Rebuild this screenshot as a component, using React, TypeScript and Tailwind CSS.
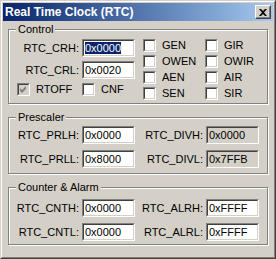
import React from "react";

const face = "font-['Liberation_Sans',Arial,sans-serif]";

function Field({ value, selected, readOnly }: { value: string; selected?: boolean; readOnly?: boolean }) {
  return (
    <div className="h-[18px] w-[53px] border border-t-[#808080] border-l-[#808080] border-b-white border-r-white">
      <div
        className={`h-full flex items-center pl-px border border-t-[#404040] border-l-[#404040] border-b-[#D4D0C8] border-r-[#D4D0C8] ${
          readOnly ? "bg-[#D4D0C8]" : "bg-white"
        }`}
      >
        <span className={`leading-[12px] ${selected ? "bg-[#0A246A] text-white" : "text-black"}`}>{value}</span>
      </div>
    </div>
  );
}

function Check({ label, checked, disabled }: { label: string; checked?: boolean; disabled?: boolean }) {
  return (
    <div className="flex items-center gap-[6px] h-[13px]">
      <div className="w-[13px] h-[13px] shrink-0 border border-t-[#808080] border-l-[#808080] border-b-white border-r-white">
        <div
          className={`h-full flex items-center justify-center border border-t-[#404040] border-l-[#404040] border-b-[#D4D0C8] border-r-[#D4D0C8] ${
            disabled ? "bg-[#D4D0C8]" : "bg-white"
          }`}
        >
          {checked && (
            <svg width="7" height="7" viewBox="0 0 7 7">
              <path d="M0 2 L2 4 L6 0 L6 3 L2 7 L0 5 Z" fill={disabled ? "#808080" : "#000"} />
            </svg>
          )}
        </div>
      </div>
      <span className="leading-[15px]">{label}</span>
    </div>
  );
}

function Label({ children }: { children: React.ReactNode }) {
  return <div className="text-right leading-[15px] whitespace-nowrap">{children}</div>;
}

function Group({ title, className, children }: { title: string; className: string; children: React.ReactNode }) {
  return (
    <div
      className={`relative border border-[#808080] shadow-[inset_1px_1px_0_#fff,1px_1px_0_#fff] ${className}`}
    >
      <div className="absolute left-[7px] top-[-8px] px-[2px] bg-[#D4D0C8] leading-[15px] whitespace-nowrap">
        {title}
      </div>
      {children}
    </div>
  );
}

export default function App() {
  return (
    <div
      className={`w-[276px] h-[259px] bg-[#D4D0C8] text-[11px] text-black ${face} border border-t-[#D4D0C8] border-l-[#D4D0C8] border-r-[#404040] border-b-[#404040]`}
    >
      <div className="h-full p-px flex flex-col border border-t-white border-l-white border-r-[#808080] border-b-[#808080]">
        <div className="h-[18px] flex items-center justify-between pl-[2px] pr-[2px] bg-gradient-to-r from-[#0A246A] to-[#A6CAF0]">
          <span className="text-white font-bold text-[12px] leading-[16px]">Real Time Clock (RTC)</span>
          <div className="w-[16px] h-[14px] border border-t-white border-l-white border-r-[#404040] border-b-[#404040]">
            <div className="h-full flex items-center justify-center bg-[#D4D0C8] border border-t-[#D4D0C8] border-l-[#D4D0C8] border-r-[#808080] border-b-[#808080]">
              <svg width="8" height="7" viewBox="0 0 8 7">
                <path d="M0 0h2l2 2 2-2h2L5 3.5 8 7H6L4 5 2 7H0l3-3.5z" fill="#000" />
              </svg>
            </div>
          </div>
        </div>

        <div className="flex-1 px-[5px]">
          <Group title="Control" className="h-[75px] mt-[8px]">
            <div className="flex pt-[9px]">
              <div className="grid grid-cols-[70px_53px] gap-x-[3px] gap-y-[4px] items-center content-start">
                <Label>RTC_CRH:</Label>
                <Field value="0x0000" selected />
                <Label>RTC_CRL:</Label>
                <Field value="0x0020" />
                <div className="pl-[8px]">
                  <Check label="RTOFF" checked disabled />
                </div>
                <Check label="CNF" />
              </div>
              <div className="ml-[8px] grid grid-cols-[62px_62px] gap-y-[3px] content-start">
                <Check label="GEN" />
                <Check label="GIR" />
                <Check label="OWEN" />
                <Check label="OWIR" />
                <Check label="AEN" />
                <Check label="AIR" />
                <Check label="SEN" />
                <Check label="SIR" />
              </div>
            </div>
          </Group>

          <Group title="Prescaler" className="h-[57px] mt-[13px]">
            <div className="pt-[8px] grid grid-cols-[70px_53px_65px_53px] gap-x-[3px] gap-y-[6px] items-center">
              <Label>RTC_PRLH:</Label>
              <Field value="0x0000" />
              <Label>RTC_DIVH:</Label>
              <Field value="0x0000" readOnly />
              <Label>RTC_PRLL:</Label>
              <Field value="0x8000" />
              <Label>RTC_DIVL:</Label>
              <Field value="0x7FFB" readOnly />
            </div>
          </Group>

          <Group title="Counter & Alarm" className="h-[58px] mt-[13px]">
            <div className="pt-[11px] grid grid-cols-[70px_53px_65px_53px] gap-x-[3px] gap-y-[6px] items-center">
              <Label>RTC_CNTH:</Label>
              <Field value="0x0000" />
              <Label>RTC_ALRH:</Label>
              <Field value="0xFFFF" />
              <Label>RTC_CNTL:</Label>
              <Field value="0x0000" />
              <Label>RTC_ALRL:</Label>
              <Field value="0xFFFF" />
            </div>
          </Group>
        </div>
      </div>
    </div>
  );
}
